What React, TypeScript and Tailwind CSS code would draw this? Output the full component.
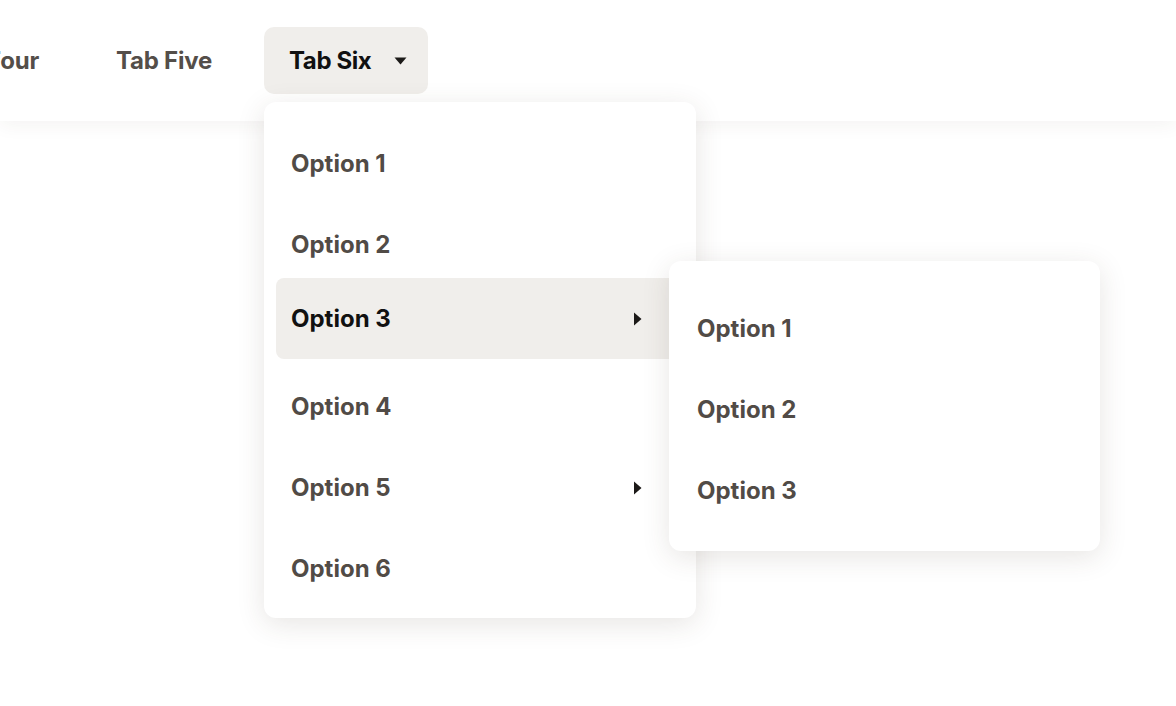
import React from "react";

function CaretDown() {
  return (
    <svg width="13" height="8" viewBox="0 0 13 8" className="shrink-0">
      <path d="M0.5 0.5h12L6.5 7.5z" fill="#1c1a18" />
    </svg>
  );
}

function CaretRight() {
  return (
    <svg width="9" height="14" viewBox="0 0 9 14" className="shrink-0">
      <path d="M1 0.5v13l7.5-6.5z" fill="#1c1a18" />
    </svg>
  );
}

function Tab({ label }: { label: string }) {
  return (
    <button
      type="button"
      className="h-[67px] min-w-[144px] shrink-0 rounded-[10px] px-[25px] text-[24px] font-bold tracking-[-0.2px] text-[#544e49]"
    >
      {label}
    </button>
  );
}

const mainItems = [
  { label: "Option 1" },
  { label: "Option 2" },
  { label: "Option 3", sub: true, active: true },
  { label: "Option 4" },
  { label: "Option 5", sub: true },
  { label: "Option 6" },
];

const subItems = ["Option 1", "Option 2", "Option 3"];

function SubMenu() {
  return (
    <div className="absolute left-[405px] top-[159px] z-30 w-[431px] rounded-[12px] bg-white px-[12px] pb-[20px] pt-[27px] shadow-[0_6px_28px_rgba(70,55,40,0.13)]">
      {subItems.map((label) => (
        <div
          key={label}
          className="flex h-[81px] items-center px-[16px] text-[24px] font-bold tracking-[0px] text-[#514b46]"
        >
          {label}
        </div>
      ))}
    </div>
  );
}

function DropdownMenu() {
  return (
    <div className="absolute left-0 top-[calc(100%+8px)] z-20 w-[432px] rounded-[12px] bg-white px-[12px] pb-[9px] pt-[21px] shadow-[0_6px_28px_rgba(70,55,40,0.13)]">
      {mainItems.map((item) => (
        <div
          key={item.label}
          className={
            item.active
              ? "-mt-[7px] mb-[7px] flex h-[81px] items-center rounded-[8px] bg-[#f0eeeb] pl-[15px] pr-[42px] text-[24px] font-bold tracking-[0px] text-[#111]"
              : "flex h-[81px] items-center rounded-[8px] pl-[15px] pr-[42px] text-[24px] font-bold tracking-[0px] text-[#514b46]"
          }
        >
          <span>{item.label}</span>
          {item.sub && (
            <span className="ml-auto flex">
              <CaretRight />
            </span>
          )}
        </div>
      ))}
      <SubMenu />
    </div>
  );
}

export default function App() {
  return (
    <div className="min-h-screen bg-white font-['Inter','Liberation_Sans',sans-serif]">
      <header className="relative z-10 flex h-[121px] items-center bg-white shadow-[0_4px_18px_rgba(60,50,40,0.06)]">
        <nav className="flex items-center gap-[28px]">
          <div className="flex w-[64px] shrink-0 justify-end overflow-hidden">
            <Tab label="Tab Four" />
          </div>
          <div className="flex w-[144px] shrink-0 justify-center overflow-hidden">
            <Tab label="Tab Five" />
          </div>
          <div className="relative shrink-0">
            <button
              type="button"
              className="flex h-[67px] w-[164px] items-center justify-between rounded-[10px] bg-[#f0eeeb] pl-[25px] pr-[21px] text-[24px] font-bold tracking-[-0.4px] text-[#111]"
            >
              Tab Six
              <CaretDown />
            </button>
            <DropdownMenu />
          </div>
        </nav>
      </header>
    </div>
  );
}
